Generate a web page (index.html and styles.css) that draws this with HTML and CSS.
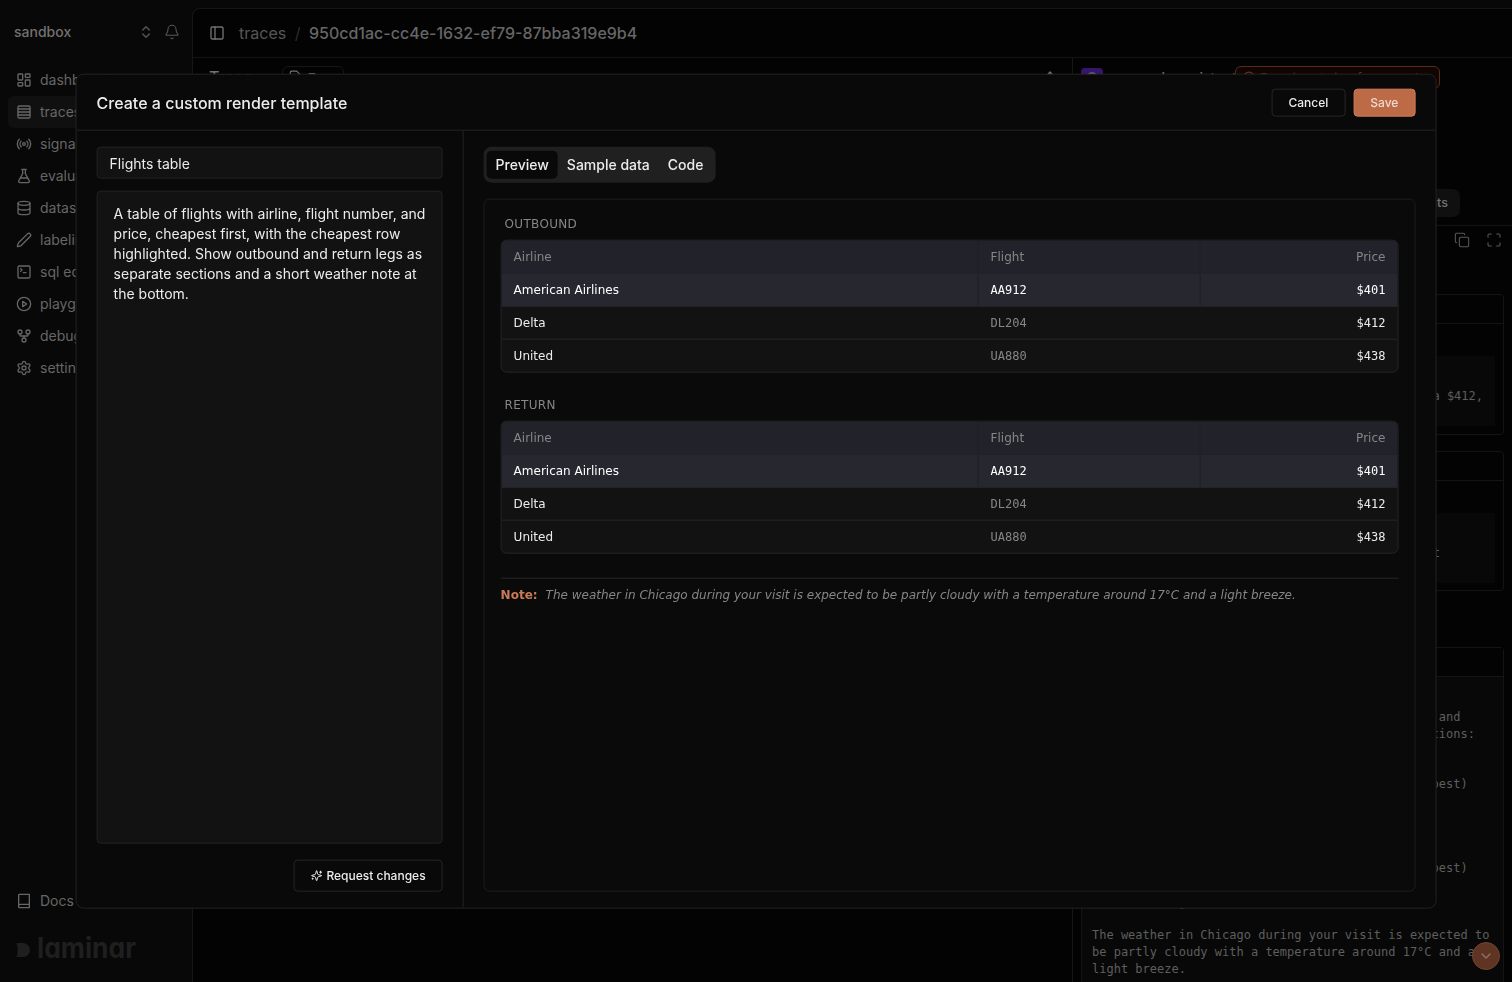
FILE: index.html
```html
<!DOCTYPE html>
<html lang="en">
<head>
<meta charset="UTF-8">
<meta name="viewport" content="width=device-width, initial-scale=1.0">
<title>Create a custom render template</title>
<link rel="stylesheet" href="styles.css">
</head>
<body>

<div class="app">
  <aside class="sidebar">
    <div class="project">
      <span class="project-name">sandbox</span>
      <svg class="icon" viewBox="0 0 24 24"><path d="m7 15 5 5 5-5M7 9l5-5 5 5"/></svg>
      <svg class="icon bell" viewBox="0 0 24 24"><path d="M10.27 21a2 2 0 0 0 3.46 0M3.26 15.33A1 1 0 0 0 4 17h16a1 1 0 0 0 .74-1.67C19.41 13.96 18 12.5 18 8A6 6 0 0 0 6 8c0 4.5-1.41 5.96-2.74 7.33"/></svg>
    </div>
    <nav class="menu">
      <a class="item"><svg class="icon" viewBox="0 0 24 24"><rect x="3" y="3" width="7" height="9" rx="1"/><rect x="14" y="3" width="7" height="5" rx="1"/><rect x="14" y="12" width="7" height="9" rx="1"/><rect x="3" y="16" width="7" height="5" rx="1"/></svg><span>dashboards</span></a>
      <a class="item active"><svg class="icon" viewBox="0 0 24 24"><rect x="3" y="3" width="18" height="18" rx="2"/><path d="M21 7.5H3M21 12H3M21 16.5H3"/></svg><span>traces</span></a>
      <a class="item"><svg class="icon" viewBox="0 0 24 24"><path d="M4.9 19.1C1 15.2 1 8.8 4.9 4.9M7.8 16.2c-2.3-2.3-2.3-6.1 0-8.5M16.2 7.8c2.3 2.3 2.3 6.1 0 8.5M19.1 4.9C23 8.8 23 15.1 19.1 19"/><circle cx="12" cy="12" r="2"/></svg><span>signals</span></a>
      <a class="item"><svg class="icon" viewBox="0 0 24 24"><path d="M14 2v6a2 2 0 0 0 .25.96l5.51 10.08A2 2 0 0 1 18 22H6a2 2 0 0 1-1.76-2.96l5.51-10.08A2 2 0 0 0 10 8V2M6.45 15h11.1M8.5 2h7"/></svg><span>evaluations</span></a>
      <a class="item"><svg class="icon" viewBox="0 0 24 24"><ellipse cx="12" cy="5" rx="9" ry="3"/><path d="M3 5v14a9 3 0 0 0 18 0V5M3 12a9 3 0 0 0 18 0"/></svg><span>datasets</span></a>
      <a class="item"><svg class="icon" viewBox="0 0 24 24"><path d="M21.17 6.81a1 1 0 0 0-3.99-3.99L3.84 16.17a2 2 0 0 0-.5.83l-1.32 4.35a.5.5 0 0 0 .62.62l4.35-1.32a2 2 0 0 0 .83-.5z"/></svg><span>labeling</span></a>
      <a class="item"><svg class="icon" viewBox="0 0 24 24"><path d="m7 11 2-2-2-2M11 13h4"/><rect x="3" y="3" width="18" height="18" rx="2"/></svg><span>sql editor</span></a>
      <a class="item"><svg class="icon" viewBox="0 0 24 24"><circle cx="12" cy="12" r="10"/><path d="m10 8 6 4-6 4z"/></svg><span>playgrounds</span></a>
      <a class="item"><svg class="icon" viewBox="0 0 24 24"><circle cx="12" cy="18" r="3"/><circle cx="6" cy="6" r="3"/><circle cx="18" cy="6" r="3"/><path d="M18 9v2c0 .6-.4 1-1 1H7c-.6 0-1-.4-1-1V9M12 12v3"/></svg><span>debugger</span></a>
      <a class="item"><svg class="icon" viewBox="0 0 24 24"><path d="M9.67 4.14a2.34 2.34 0 0 1 4.66 0 2.34 2.34 0 0 0 3.32 1.91 2.34 2.34 0 0 1 2.33 4.03 2.34 2.34 0 0 0 0 3.83 2.34 2.34 0 0 1-2.33 4.03 2.34 2.34 0 0 0-3.32 1.92 2.34 2.34 0 0 1-4.66 0 2.34 2.34 0 0 0-3.32-1.92 2.34 2.34 0 0 1-2.33-4.03 2.34 2.34 0 0 0 0-3.83 2.34 2.34 0 0 1 2.33-4.03 2.34 2.34 0 0 0 3.32-1.91"/><circle cx="12" cy="12" r="3"/></svg><span>settings</span></a>
    </nav>
    <a class="item docs"><svg class="icon" viewBox="0 0 24 24"><path d="M4 19.5V3a1 1 0 0 1 1-1h15v20H5a1 1 0 0 1-1-1v-1.500c0-1.500 1-2.500 2-2.500h14"/></svg><span>Docs</span></a>
    <svg class="logo" viewBox="0 0 130 36">
      <path d="M0.500 12h6.500a7 7 0 0 1 0 14H0.500q2.400-7 0-14z"/>
      <text x="21" y="27" textLength="99" lengthAdjust="spacingAndGlyphs">laminar</text>
    </svg>
  </aside>

  <main class="main">
    <header class="topbar">
      <svg class="icon" viewBox="0 0 24 24"><rect x="3" y="3" width="18" height="18" rx="2"/><path d="M9 3v18"/></svg>
      <span class="crumb">traces</span>
      <span class="slash">/</span>
      <span class="trace-id">950cd1ac-cc4e-1632-ef79-87bba319e9b4</span>
    </header>
    <div class="split">
      <section class="tree">
        <span class="tree-title">Trace</span>
        <span class="tree-pill"><svg class="icon" viewBox="0 0 24 24"><path d="M15 2H6a2 2 0 0 0-2 2v16a2 2 0 0 0 2 2h12a2 2 0 0 0 2-2V7z"/></svg>Tree</span>
        <svg class="icon diamond" viewBox="0 0 24 24"><path d="M12 3l8 9-8 9-8-9z"/></svg>
      </section>
      <section class="detail">
        <div class="span-head">
          <span class="span-icon"><svg class="icon" viewBox="0 0 24 24"><circle cx="12" cy="12" r="9"/></svg></span>
          <span class="span-name">research_assistant</span>
          <span class="error-pill"><svg class="icon" viewBox="0 0 24 24"><circle cx="12" cy="12" r="10"/></svg>Experiment view for caused</span>
        </div>
        <div class="span-tabs"><span>Events</span></div>
        <div class="toolbar">
          <svg class="icon" viewBox="0 0 24 24"><rect x="8" y="8" width="14" height="14" rx="2"/><path d="M4 16c-1.100 0-2-.9-2-2V4c0-1.100.9-2 2-2h10c1.100 0 2 .9 2 2"/></svg>
          <svg class="icon" viewBox="0 0 24 24"><path d="M8 3H5a2 2 0 0 0-2 2v3M21 8V5a2 2 0 0 0-2-2h-3M3 16v3a2 2 0 0 0 2 2h3M16 21h3a2 2 0 0 0 2-2v-3"/></svg>
        </div>
        <div class="card short">
          <div class="card-head"></div>
          <pre class="code">AA912 is $401 and Delta $412,</pre>
        </div>
        <div class="card short">
          <div class="card-head"></div>
          <pre class="code second">cheapest first output</pre>
        </div>
        <div class="card long">
          <div class="card-head"></div>
          <pre class="answer">I checked both directions of your Chicago trip, and
these are the flights I found with their connections:

Outbound:
1. American Airlines AA912, economy, $401 (cheapest)
2. Delta DL204, $412
3. United UA880, $438

Return:
1. American Airlines AA912, economy, $401 (cheapest)

Notes: Chicago weather

The weather in Chicago during your visit is expected to
be partly cloudy with a temperature around 17°C and a
light breeze.</pre>
        </div>
      </section>
    </div>
  </main>
  <button class="scroll-down"><svg class="icon" viewBox="0 0 24 24"><path d="m6 9 6 6 6-6"/></svg></button>
</div>

<div class="modal">
  <div class="modal-head">
    <h1>Create a custom render template</h1>
    <button class="btn">Cancel</button>
    <button class="btn primary">Save</button>
  </div>
  <div class="modal-body">
    <form class="prompt">
      <input type="text" class="field" value="Flights table">
      <textarea class="field">A table of flights with airline, flight number, and price, cheapest first, with the cheapest row highlighted. Show outbound and return legs as separate sections and a short weather note at the bottom.</textarea>
      <button type="button" class="btn request"><svg class="icon" viewBox="0 0 24 24"><path d="M9.940 15.500A2 2 0 0 0 8.500 14.060l-6.140-1.580a.5.5 0 0 1 0-.96L8.500 9.940A2 2 0 0 0 9.940 8.500l1.580-6.140a.5.5 0 0 1 .96 0L14.060 8.500A2 2 0 0 0 15.500 9.940l6.140 1.580a.5.5 0 0 1 0 .96L15.500 14.060a2 2 0 0 0-1.440 1.440l-1.580 6.140a.5.5 0 0 1-.96 0zM20 3v4M22 5h-4M4 17v2M5 18H3"/></svg>Request changes</button>
    </form>
    <div class="result">
      <div class="tabs">
        <span class="tab active">Preview</span>
        <span class="tab">Sample data</span>
        <span class="tab">Code</span>
      </div>
      <div class="preview">
        <h2>Outbound</h2>
        <div class="table">
          <div class="row head"><span>Airline</span><span>Flight</span><span>Price</span></div>
          <div class="row best"><span>American Airlines</span><span>AA912</span><span>$401</span></div>
          <div class="row"><span>Delta</span><span>DL204</span><span>$412</span></div>
          <div class="row"><span>United</span><span>UA880</span><span>$438</span></div>
        </div>
        <h2>Return</h2>
        <div class="table">
          <div class="row head"><span>Airline</span><span>Flight</span><span>Price</span></div>
          <div class="row best"><span>American Airlines</span><span>AA912</span><span>$401</span></div>
          <div class="row"><span>Delta</span><span>DL204</span><span>$412</span></div>
          <div class="row"><span>United</span><span>UA880</span><span>$438</span></div>
        </div>
        <p class="note"><b>Note:</b><i>The weather in Chicago during your visit is expected to be partly cloudy with a temperature around 17°C and a light breeze.</i></p>
      </div>
    </div>
  </div>
</div>

</body>
</html>
```

FILE: styles.css
```css
* {
  box-sizing: border-box;
}

body {
  margin: 0;
  height: 100vh;
  overflow: hidden;
  background-color: #080808;
  color: #727272;
  font-family: Inter, sans-serif;
  font-size: 14px;
}

.icon {
  width: 16px;
  height: 16px;
  flex: none;
  fill: none;
  stroke: currentColor;
  stroke-width: 2;
  stroke-linecap: round;
  stroke-linejoin: round;
}

button {
  font-family: inherit;
}

.app {
  display: flex;
  height: 100vh;
}

/* sidebar */
.sidebar {
  width: 192px;
  flex: none;
  display: flex;
  flex-direction: column;
  padding: 0 8px;
}

.project {
  display: flex;
  align-items: center;
  height: 64px;
  padding: 0 4px 0 6px;
}

.project-name {
  flex: 1;
  padding-bottom: 2px;
  font-weight: 500;
  font-size: 14px;
}

.project .icon {
  color: #575757;
}

.bell {
  margin-left: 10px;
}

.project .bell {
  stroke-width: 1.6;
}

.item {
  display: flex;
  align-items: center;
  gap: 8px;
  height: 32px;
  padding-left: 8px;
  border-radius: 6px;
  flex: none;
  font-size: 14px;
  color: #666;
}

.item span {
  padding-bottom: 2px;
}

.item.active {
  background-color: #101011;
}

.docs {
  margin-top: auto;
}

.logo {
  width: 130px;
  height: 36px;
  margin: 14px 0 15px 8px;
  fill: #1f1f1f;
}

.logo text {
  font-family: Inter, sans-serif;
  font-size: 28px;
  font-weight: 700;
  font-feature-settings: "cv11", "ss01";
}

/* trace page */
.main {
  flex: 1;
  min-width: 0;
  margin-top: 8px;
  border-left: 1px solid #161616;
  border-top: 1px solid #161616;
  border-radius: 8px 0 0 0;
  background-color: #030303;
  display: flex;
  flex-direction: column;
}

.topbar {
  display: flex;
  align-items: center;
  flex: none;
  height: 49px;
  padding-left: 16px;
  border-bottom: 1px solid #131313;
  font-size: 16px;
}

.crumb {
  margin-left: 14px;
  color: #565656;
}

.slash {
  margin: 0 8.5px;
  color: #2c2c2c;
}

.trace-id {
  font-weight: 500;
  color: #666;
}

.split {
  flex: 1;
  min-height: 0;
  display: flex;
}

.tree {
  width: 879px;
  flex: none;
  display: flex;
  padding: 8px 13px 0 16px;
}

.tree-title {
  width: 73px;
  font-size: 16px;
  font-weight: 500;
  line-height: 22px;
}

.tree-pill {
  display: flex;
  align-items: center;
  gap: 6px;
  width: 62px;
  height: 22px;
  padding-left: 5px;
  border: 1px solid #161616;
  border-radius: 6px;
  font-size: 12px;
}

.tree-pill .icon {
  width: 14px;
}

.diamond {
  width: 18px;
  margin: 4px 0 0 auto;
  fill: currentColor;
}

.detail {
  flex: 1;
  min-width: 0;
  overflow: hidden;
  border-left: 1px solid #161616;
  padding: 8px 8px 0;
}

.span-head {
  display: flex;
  height: 24px;
}

.span-icon {
  width: 22px;
  height: 22px;
  margin-top: 2px;
  padding: 3px;
  border-radius: 4px;
  background-color: #36166d;
}

.span-name {
  width: 124px;
  margin-left: 8px;
  overflow: hidden;
  line-height: 24px;
  font-weight: 500;
}

.error-pill {
  display: flex;
  align-items: center;
  gap: 4px;
  width: 205px;
  height: 23px;
  padding-left: 6px;
  border: 1px solid #5c2a18;
  border-radius: 6px;
  background-color: #100503;
  color: #65301d;
  font-size: 12px;
  white-space: nowrap;
}

.error-pill .icon {
  width: 14px;
}

.span-tabs {
  display: flex;
  height: 136px;
  margin: 0 -8px;
  padding: 99px 52px 0;
  justify-content: flex-end;
  border-bottom: 1px solid #131313;
}

.span-tabs span {
  height: 28px;
  padding: 0 12px;
  line-height: 28px;
  border-radius: 7px;
  background-color: #101010;
  font-weight: 500;
  font-size: 12.5px;
}

.toolbar {
  display: flex;
  justify-content: flex-end;
  gap: 16px;
  padding: 6px 2px 0;
  height: 68px;
  color: #585858;
}

.toolbar .icon {
  stroke-width: 1.6;
}

.card {
  border: 1px solid #141414;
  border-radius: 4px;
  padding: 0 8px;
}

.card.short {
  height: 141px;
  margin-bottom: 16px;
}

.card.short + .card.short {
  height: 140px;
}

.card + .card.long {
  margin-top: 56px;
  height: 400px;
  padding: 0;
  background-color: #080808;
}

.card-head {
  height: 29px;
  margin: 0 -8px;
  border-bottom: 1px solid #141414;
}

.long .card-head {
  margin: 0;
  background-color: #030303;
}

.code,
.answer {
  margin: 0;
  font-family: "DejaVu Sans Mono", monospace;
  font-size: 12px;
  line-height: 16.8px;
  color: #5e5e5e;
}

.code {
  height: 70px;
  margin-top: 32px;
  padding: 32px 12px 0;
  background-color: #080808;
  text-align: right;
}

.code.second {
  padding-right: 55px;
}

.answer {
  padding: 32px 10px 0;
}

.scroll-down {
  position: absolute;
  right: 12px;
  bottom: 12px;
  display: flex;
  align-items: center;
  justify-content: center;
  width: 28px;
  height: 28px;
  padding: 0;
  border: 1px solid #6f4330;
  border-radius: 50%;
  background-color: #5f3422;
  color: #86756e;
}

/* dialog */
.modal {
  position: fixed;
  top: 50%;
  left: 50%;
  transform: translate(-50%, -50%);
  display: flex;
  flex-direction: column;
  width: 90vw;
  height: 85vh;
  border: 1px solid #232323;
  border-radius: 8px;
  background-color: #090909;
  color: #ececec;
  overflow: hidden;
}

.modal-head {
  display: flex;
  align-items: center;
  gap: 8px;
  flex: none;
  height: 56px;
  padding: 0 20px;
  border-bottom: 1px solid #232323;
}

h1 {
  flex: 1;
  margin: 0;
  font-size: 16px;
  font-weight: 500;
}

.btn {
  height: 28px;
  padding: 0 16px;
  border: 1px solid #262626;
  border-radius: 4px;
  background-color: #090909;
  color: #ececec;
  font-size: 12px;
  font-weight: 500;
}

.btn.primary {
  border-color: #d07f5c;
  background-color: #bd6b47;
  color: #f0d9cf;
}

.modal-body {
  flex: 1;
  min-height: 0;
  display: flex;
}

.prompt {
  display: flex;
  flex-direction: column;
  width: 387px;
  flex: none;
  padding: 16px 20px;
  border-right: 1px solid #232323;
}

.field {
  border: 1px solid #232323;
  border-radius: 4px;
  background-color: #121212;
  color: #ececec;
  font-family: inherit;
  font-size: 14px;
  outline: none;
}

input.field {
  height: 32px;
  padding: 0 12px;
}

textarea.field {
  flex: 1;
  margin: 12px 0 16px;
  padding: 12px 16px;
  line-height: 20px;
  resize: none;
}

.request {
  display: flex;
  align-items: center;
  gap: 4px;
  align-self: flex-end;
  height: 32px;
}

.request .icon {
  width: 12px;
  height: 12px;
}

.result {
  flex: 1;
  min-width: 0;
  display: flex;
  flex-direction: column;
  align-items: stretch;
  padding: 16px 20px;
}

.tabs {
  display: flex;
  align-self: flex-start;
  height: 36px;
  padding: 4px 3px;
  border-radius: 8px;
  background-color: #202020;
}

.tab {
  padding: 0 9px;
  line-height: 28px;
  border-radius: 5px;
  font-size: 14px;
  font-weight: 500;
}

.tab.active {
  background-color: #090909;
}

.preview {
  flex: 1;
  margin-top: 16px;
  padding: 16px;
  border: 1px solid #1e1e1e;
  border-radius: 6px;
  background-color: #0a0a0a;
  font-family: "DejaVu Sans", sans-serif;
  font-size: 12px;
}

h2 {
  margin: 0 0 8px;
  padding-left: 4px;
  font-size: 12px;
  font-weight: 400;
  line-height: 16px;
  letter-spacing: 0.3px;
  text-transform: uppercase;
  color: #868686;
}

.table {
  margin-bottom: 24px;
  border: 1px solid #26262a;
  border-radius: 6px;
  background-color: #121212;
  overflow: hidden;
}

.row {
  display: grid;
  grid-template-columns: 477px 222px 1fr;
  height: 33px;
  line-height: 32px;
  border-bottom: 1px solid #26262a;
}

.row:last-child {
  height: 32px;
  border-bottom: none;
}

.row span {
  padding: 0 12px;
}

.row span:nth-child(2) {
  font-family: "DejaVu Sans Mono", monospace;
  color: #868686;
}

.row span:last-child {
  font-family: "DejaVu Sans Mono", monospace;
  text-align: right;
}

.row.head span,
.row.head span:nth-child(2),
.row.head span:last-child {
  font-family: "DejaVu Sans", sans-serif;
  color: #868686;
}

.row.head {
  background-color: #22222a;
  border-bottom-color: #24242c;
}

.row.best {
  background-color: #272730;
}

.head span + span,
.best span + span {
  box-shadow: -1px 0 #202027;
}

.row.best span,
.row.best span:nth-child(2) {
  color: #fff;
}

.note {
  margin: 0;
  padding-top: 8px;
  border-top: 1px solid #26262a;
  line-height: 16px;
}

.note b {
  margin-right: 8px;
  color: #c97a56;
}

.note i {
  color: #868686;
}
```
